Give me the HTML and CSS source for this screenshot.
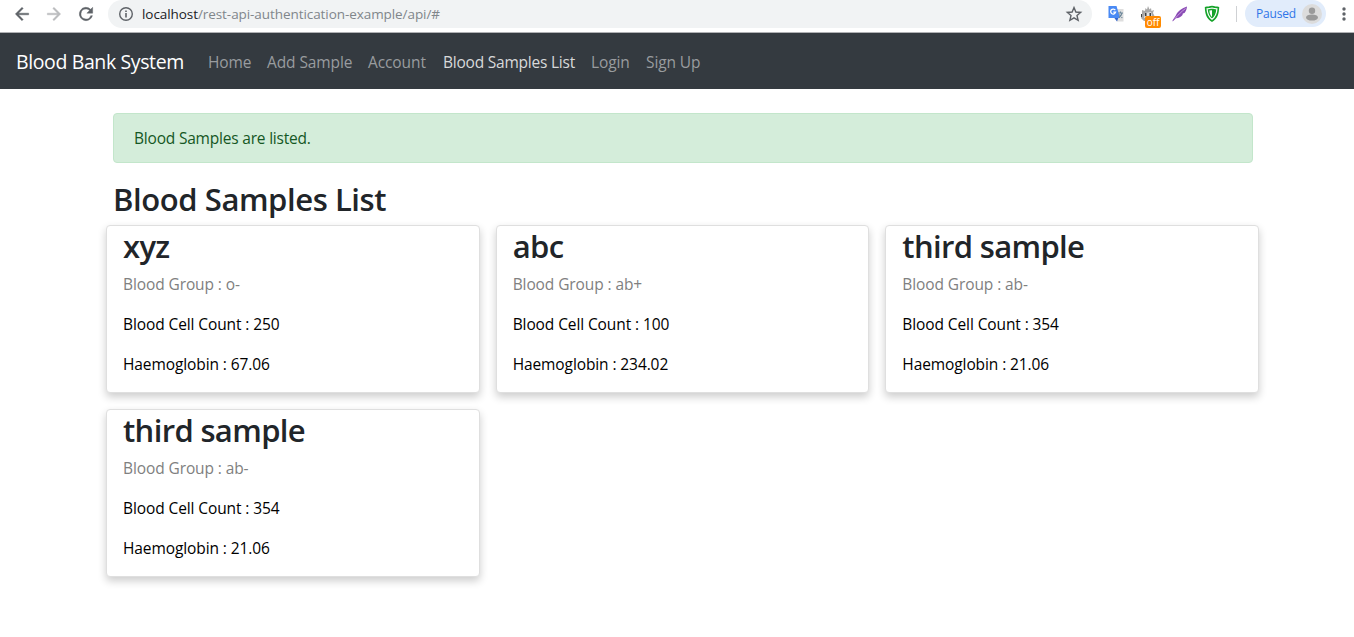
FILE: index.html
```html
<!DOCTYPE html>
<html lang="en">
<head>
<meta charset="utf-8">
<title>Blood Bank System</title>
<link rel="stylesheet" href="styles.css">
</head>
<body>
<header class="browser">
  <svg class="nav-icon" viewBox="0 0 24 24" width="20" height="20"><path fill="#5f6368" d="M20 11H7.83l5.59-5.59L12 4l-8 8 8 8 1.41-1.41L7.83 13H20z" stroke="#5f6368" stroke-width=".5"/></svg>
  <svg class="nav-icon" viewBox="0 0 24 24" width="20" height="20"><path fill="#babcbe" d="M4 11h12.17l-5.59-5.59L12 4l8 8-8 8-1.41-1.41L16.17 13H4z" stroke="#babcbe" stroke-width=".5"/></svg>
  <svg class="nav-icon" viewBox="0 0 24 24" width="20" height="20"><path fill="#5f6368" stroke="#5f6368" stroke-width=".5" d="M17.65 6.35A8 8 0 1 0 19.73 14h-2.08A6 6 0 1 1 12 6c1.66 0 3.14.69 4.22 1.78L13 11h7V4z"/></svg>
  <div class="address">
    <svg width="16" height="16" viewBox="0 0 16 16"><circle cx="8" cy="8" r="6.3" fill="none" stroke="#5f6368" stroke-width="1.4"/><path fill="#5f6368" d="M7.2 7h1.6v4.4H7.2zM7.2 4.4h1.6V6H7.2z"/></svg>
    <span class="url"><span class="host">localhost</span>/rest-api-authentication-example/api/#</span>
    <svg class="star" width="18" height="18" viewBox="0 0 24 24"><path fill="none" stroke="#5f6368" stroke-width="1.9" d="M12 3.4l2.5 5.9 6.4.6-4.9 4.2 1.5 6.3-5.5-3.3-5.5 3.3L8 14.100 3.100 9.900l6.4-.6z"/></svg>
  </div>
  <svg class="ext first" width="18" height="18" viewBox="0 0 18 18">
    <path fill="#dedede" d="M7 4h9.500v12.500H10z"/><path fill="#3565c9" d="M7 12.500h4.500l-1.500 4z"/>
    <path fill="#4a8af4" d="M1.500 1h8l3.500 12H1.500z"/>
    <path fill="none" stroke="#fff" stroke-width="1.300" d="M8.300 5.200A2.500 2.500 0 1 0 8.600 7.200H6.300"/>
    <path fill="none" stroke="#6c879a" stroke-width="1.100" d="M11 8h5M13.500 6.500V8M15 8c-.5 2-1.500 3.500-3 4.500M12.300 9.500l3 3.500"/>
  </svg>
  <div class="blocker">
    <svg width="18" height="18" viewBox="0 0 18 18">
      <path fill="#a8a8a8" d="M3 5l3 1 .5-3L8 4.500 9 1l1.500 3.500L12 3l.5 3 2.500-1-1 3 1.500 3-2 5H5L2 13l1-4z"/>
      <path fill="#e2e2e2" d="M6 8l6-1 1.500 6H5z"/><path fill="#424242" d="M6 8h1.500v3H6zM10.500 8H12v3h-1.500zM2 9h1v3H2z"/>
    </svg>
    <span class="off">off</span>
  </div>
  <svg class="ext" width="18" height="18" viewBox="0 0 18 18"><path fill="#8a4bb5" d="M16 1.500C11 3 6.500 6.500 4.800 10.500L1.500 15.500l.2 1L5 13.300c3-.3 5-1.300 6.500-3.300l.3-1.500 1.700-.5C15 6 15.800 4 16 1.500z"/><path fill="none" stroke="#cfa5e2" stroke-width=".9" d="M14.500 3.500C10.500 6.500 7.500 9.500 4 13.500"/></svg>
  <svg class="ext" width="18" height="18" viewBox="0 0 18 18"><path fill="#16a32a" d="M9 .8c2.500.5 4.500.8 7.200 1.100C16 9 14.500 13.500 9 17 3.500 13.500 2 9 1.800 1.900 4.500 1.600 6.500 1.300 9 .8z"/><path fill="none" stroke="#fff" stroke-width="1.200" d="M9 3c1.800.4 3.200.6 4.900.8-.2 5-1.400 7.900-4.900 10.500C5.500 11.700 4.300 8.800 4.100 3.800 5.800 3.600 7.200 3.400 9 3z"/><path fill="#fff" d="M9 5.200V12C7.200 10.500 6.600 8.500 6.400 5.600z"/></svg>
  <span class="divider"></span>
  <div class="profile"><span>Paused</span>
    <svg width="20" height="20" viewBox="0 0 20 20"><circle cx="10" cy="10" r="10" fill="#dcdcdc"/><circle cx="10" cy="6.700" r="3.200" fill="#9a9a9a"/><ellipse cx="10" cy="13.500" rx="6" ry="3.100" fill="#9a9a9a"/></svg>
  </div>
  <svg class="menu" width="4" height="16" viewBox="0 0 4 16"><g fill="#5f6368"><circle cx="2" cy="3" r="1.700"/><circle cx="2" cy="8" r="1.700"/><circle cx="2" cy="13" r="1.700"/></g></svg>
</header>
<nav class="navbar">
  <a class="brand">Blood Bank System</a>
  <a class="link home">Home</a>
  <a class="link add">Add Sample</a>
  <a class="link account">Account</a>
  <a class="link samples active">Blood Samples List</a>
  <a class="link login">Login</a>
  <a class="link signup">Sign Up</a>
</nav>
<main class="container">
  <div class="alert">Blood Samples are listed.</div>
  <h2 class="title">Blood Samples List</h2>
  <div class="cards">
    <section class="card"><h2>xyz</h2><p class="group">Blood Group : o-</p><p>Blood Cell Count : 250</p><p>Haemoglobin : 67.06</p></section>
    <section class="card"><h2>abc</h2><p class="group">Blood Group : ab+</p><p>Blood Cell Count : 100</p><p>Haemoglobin : 234.02</p></section>
    <section class="card"><h2>third sample</h2><p class="group">Blood Group : ab-</p><p>Blood Cell Count : 354</p><p>Haemoglobin : 21.06</p></section>
    <section class="card"><h2>third sample</h2><p class="group">Blood Group : ab-</p><p>Blood Cell Count : 354</p><p>Haemoglobin : 21.06</p></section>
  </div>
</main>
</body>
</html>
```
FILE: styles.css
```css
* { box-sizing: border-box; }
body {
  margin: 0;
  height: 637px;
  overflow: hidden;
  background: #fff;
  color: #212529;
  font: 15.5px/24px "Open Sans", "Noto Sans", sans-serif;
  letter-spacing: -0.1px;
}
svg { display: block; flex: none; }

.browser {
  display: flex;
  align-items: center;
  height: 33px;
  padding: 0 8px 5px 12px;
  border-bottom: 1px solid #b0b1b4;
}
.nav-icon { margin-right: 12px; }
.address {
  display: flex;
  align-items: center;
  width: 984px;
  height: 28px;
  padding: 0 9px 0 10px;
  border-radius: 14px;
  background: #f1f3f4;
}
.url {
  margin-left: 8px;
  color: #80868b;
  font-size: 13.5px;
  letter-spacing: -0.07px;
  white-space: nowrap;
}
.host { color: #202124; }
.star { margin-left: auto; }
.ext { margin-left: 14px; }
.ext.first { margin-left: 15px; }
.blocker { position: relative; margin-left: 14px; }
.off {
  position: absolute;
  left: 6px;
  top: 11px;
  width: 16px;
  height: 12px;
  border-radius: 2px;
  background: #ff8a00;
  color: #fff;
  font-size: 10px;
  line-height: 12px;
  letter-spacing: 0;
  text-align: center;
}
.divider { width: 1px; height: 16px; margin: 0 8px 0 15px; background: #cfd1d4; }
.profile {
  display: flex;
  align-items: center;
  justify-content: space-between;
  width: 81px;
  height: 27px;
  padding: 0 4px 0 11px;
  border-radius: 14px;
  background: #e1ecfb;
  color: #2f75e8;
  font-size: 12px;
  letter-spacing: -0.2px;
}
.menu { margin-left: auto; }

.navbar {
  display: flex;
  align-items: center;
  height: 56px;
  padding: 1px 16px 0;
  background: #343a40;
  white-space: nowrap;
}
.brand { width: 192px; color: #fff; font-size: 19.5px; letter-spacing: -0.38px; }
.link { color: #999c9f; }
.link.active { color: #d8d9da; letter-spacing: -0.22px; }
.home { width: 59px; }
.add { width: 101px; }
.account { width: 75px; }
.samples { width: 148px; }
.login { width: 55px; }

.container { width: 1140px; margin: 24px 0 0 113px; }
.alert {
  height: 50px;
  padding: 12px 20px;
  border: 1px solid #c3e6cb;
  border-radius: 4px;
  background: #d4edda;
  color: #155724;
  letter-spacing: -0.2px;
}
h2 { margin: 0; font-size: 31px; font-weight: 600; line-height: 38px; letter-spacing: -0.42px; }
.title { margin: 17px 0 7px; }
.cards {
  display: grid;
  grid-template-columns: repeat(3, 1fr);
  gap: 16px;
  width: 1153px;
  margin-left: -7px;
}
.card {
  height: 168px;
  padding: 1px 16px 0;
  border: 1px solid #dfdfdf;
  border-radius: 4px;
  background: #fff;
  color: #000;
  box-shadow: 0 4px 8px rgba(0, 0, 0, .2);
}
.card h2 { margin-bottom: 7px; color: #212529; letter-spacing: -0.65px; }
.card p { margin: 0 0 16px; }
.card .group { color: #808080; }
```
